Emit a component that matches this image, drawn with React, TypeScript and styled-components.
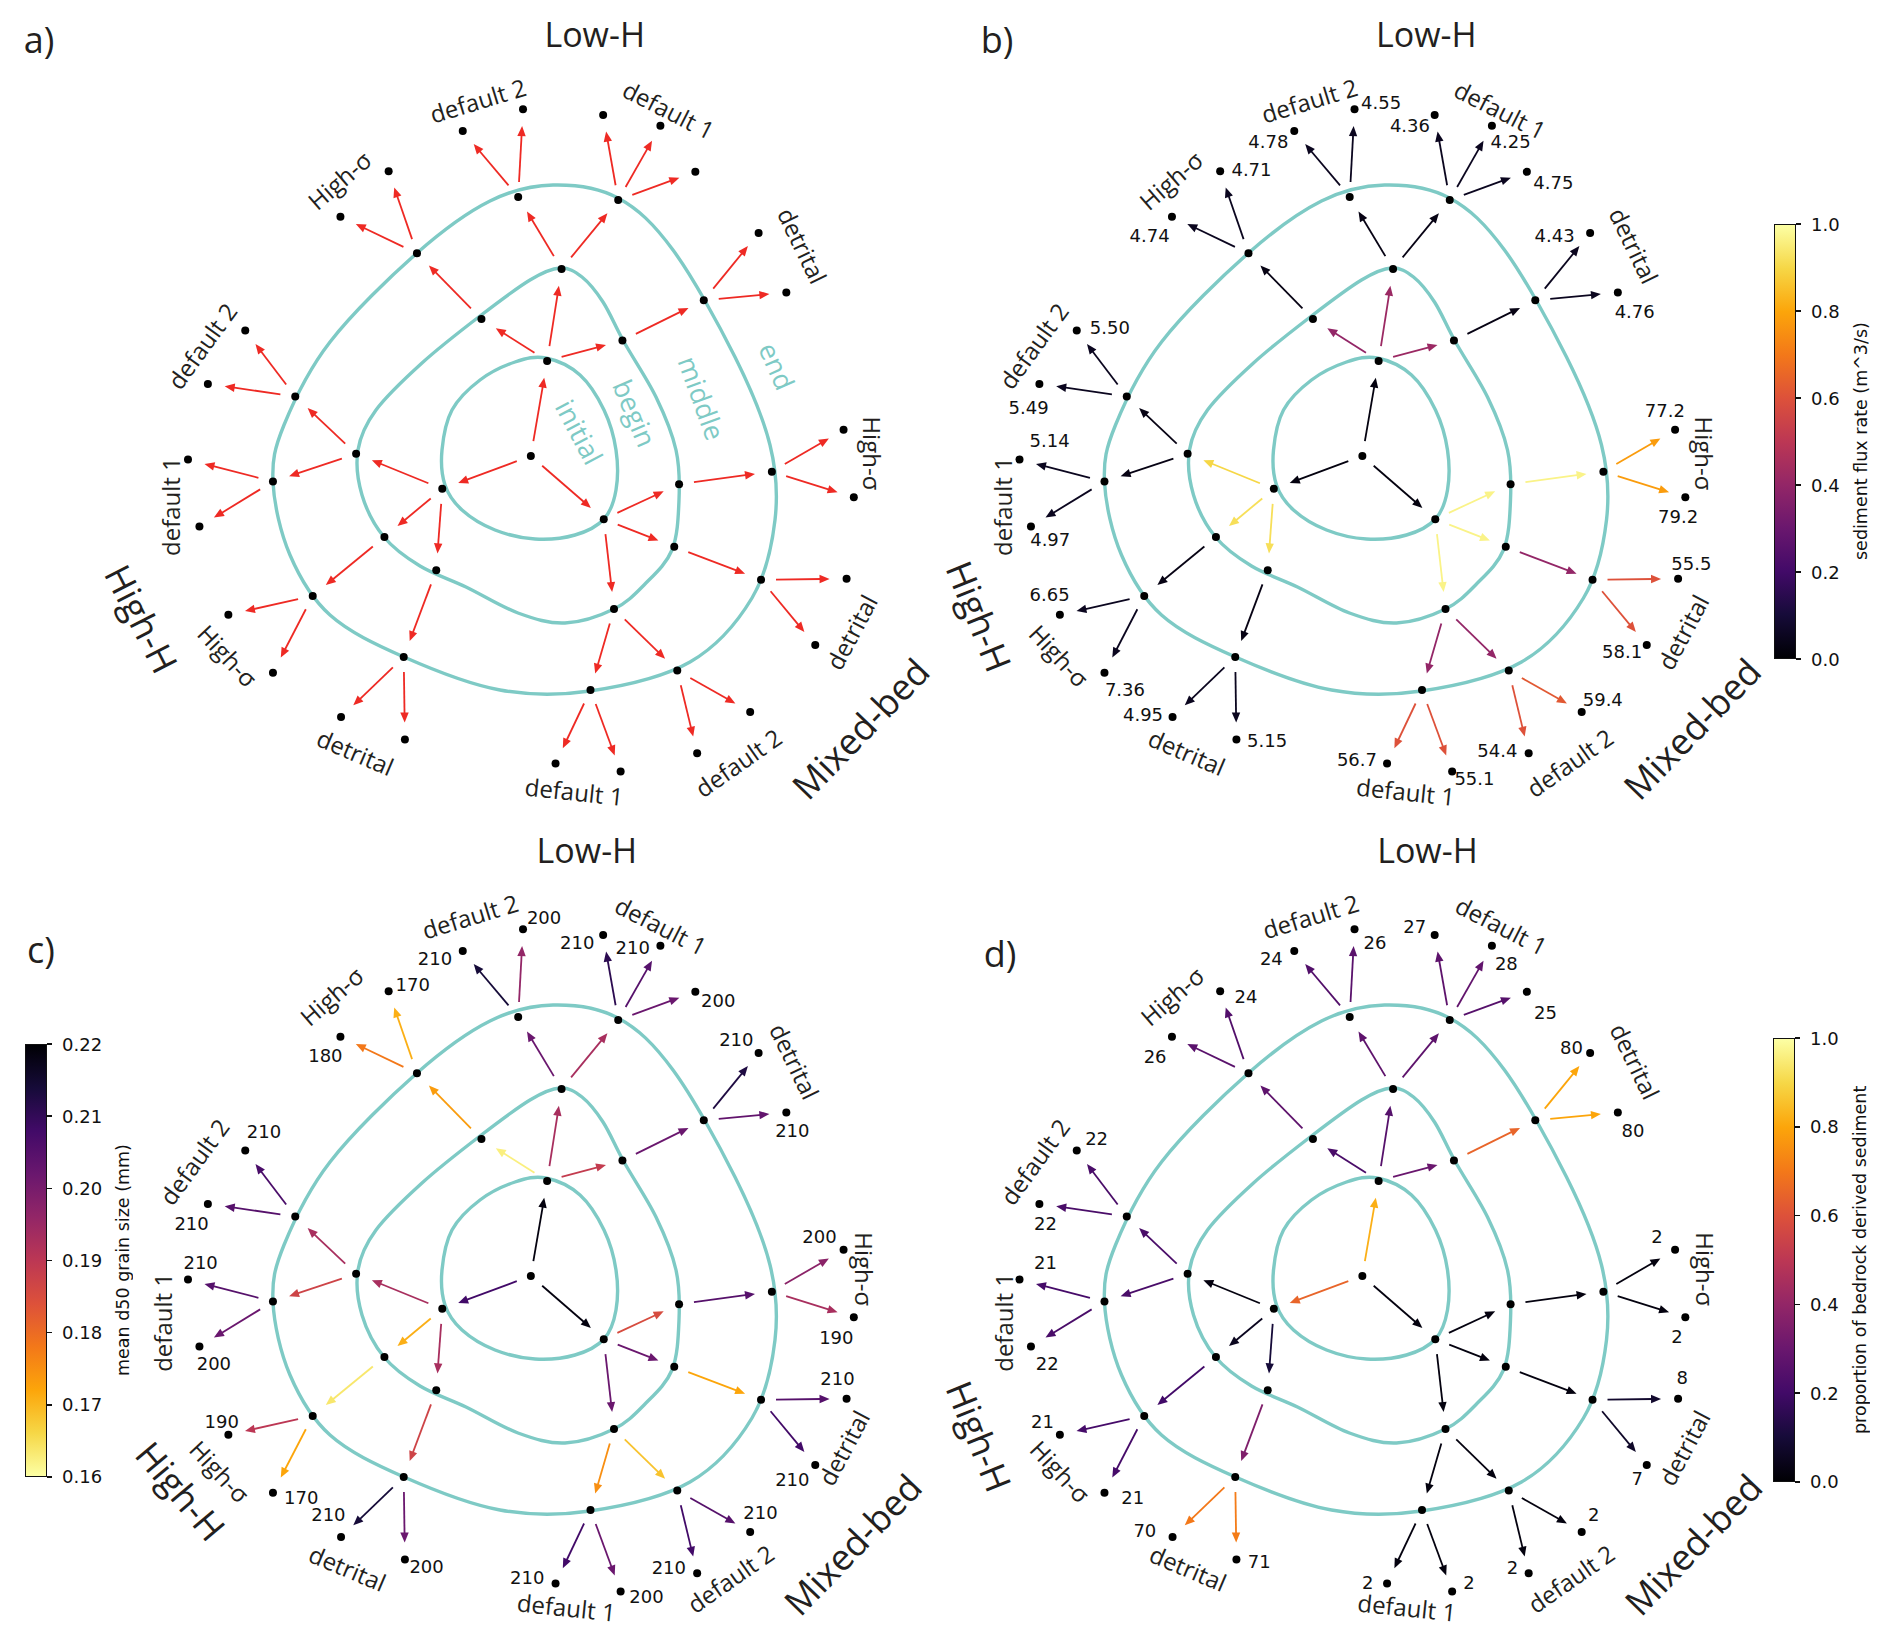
import React from 'react';
import styled, { createGlobalStyle } from 'styled-components';

type Pt = [number, number];

// nodes and labels were traced on a 1570 x 1570 grid laid over each 946 x 820 panel
const KX = 946 / 1570;
const KY = 820 / 1570;

const TEAL = '#7ecac5';
const INK = '#231f20';
const RED = '#ee2a24';

const INFERNO = [
    '#000004', '#160b39', '#420a68', '#6a176e', '#932667', '#bc3754',
    '#dd513a', '#f37819', '#fca50a', '#f6d746', '#fcffa4',
];

const hex = (h: string) => [1, 3, 5].map(i => parseInt(h.slice(i, i + 2), 16));

function inferno(t: number): string {
    const v = Math.min(1, Math.max(0, t)) * 10;
    const i = Math.min(9, Math.floor(v));
    const f = v - i;
    const a = hex(INFERNO[i]);
    const b = hex(INFERNO[i + 1]);
    return `rgb(${a.map((x, k) => Math.round(x + (b[k] - x) * f)).join(',')})`;
}

const INFERNO_CSS = INFERNO.join(', ');

const NODES: Record<string, Pt> = {
    C: [881, 873],
    I1: [908, 691], I2: [734, 936], I3: [1002, 994],
    B1: [932, 515], B2: [799, 611], B3: [1033, 652], B4: [591, 869], B5: [1127, 927],
    B6: [638, 1028], B7: [1119, 1047], B8: [724, 1092], B9: [1019, 1166],
    O1: [860, 377], O2: [1026, 383], O3: [692, 485], O4: [1168, 575], O5: [490, 759], O6: [453, 922],
    O7: [1281, 903], O8: [519, 1141], O9: [1263, 1110], O10: [670, 1258], O11: [1124, 1284], O12: [980, 1321],
};

const LEAVES: Record<string, Pt> = {
    O3a: [565, 415], O3b: [645, 328],
    O1a: [768, 251], O1b: [868, 209],
    O2a: [1001, 220], O2b: [1096, 241], O2c: [1154, 329],
    O4a: [1259, 446], O4b: [1305, 560],
    O5a: [407, 633], O5b: [345, 735],
    O6a: [312, 880], O6b: [331, 1008],
    O7a: [1400, 823], O7b: [1417, 952],
    O8a: [379, 1177], O8b: [453, 1288],
    O9a: [1405, 1108], O9b: [1353, 1235],
    O10a: [566, 1373], O10b: [672, 1416],
    O11a: [1157, 1442], O11b: [1245, 1363],
    O12a: [922, 1462], O12b: [1030, 1477],
};

// [parent, child]
const EDGES: [string, string][] = [
    ['C', 'I1'], ['C', 'I2'], ['C', 'I3'],
    ['I1', 'B1'], ['I1', 'B2'], ['I1', 'B3'],
    ['I2', 'B4'], ['I2', 'B6'], ['I2', 'B8'],
    ['I3', 'B5'], ['I3', 'B7'], ['I3', 'B9'],
    ['B2', 'O3'], ['B1', 'O1'], ['B1', 'O2'], ['B3', 'O4'],
    ['B4', 'O5'], ['B4', 'O6'], ['B6', 'O8'], ['B8', 'O10'],
    ['B5', 'O7'], ['B7', 'O9'], ['B9', 'O12'], ['B9', 'O11'],
    ...Object.keys(LEAVES).map(k => [k.slice(0, -1), k] as [string, string]),
];

// ring outlines in panel pixels, clockwise from the top
const RINGS: Pt[][] = [
    [[546, 358], [580, 375], [604, 410], [616, 450], [616, 490], [604, 519], [575, 535], [535, 539],
        [495, 530], [462, 510], [445, 485], [442, 450], [452, 410], [480, 380], [515, 362]],
    [[560, 268], [582, 277], [603, 302], [624, 342], [656, 397], [676, 450], [679, 500], [672, 550],
        [645, 584], [614, 609], [565, 623], [518, 613], [466, 587], [420, 566], [384, 537], [362, 495],
        [358, 450], [376, 410], [422, 363], [480, 316], [530, 280]],
    [[553, 185], [618, 198], [673, 250], [735, 357], [770, 445], [775, 520], [752, 598], [690, 662],
        [590, 691], [500, 690], [404, 657], [330, 615], [290, 555], [273, 482], [284, 425], [330, 342],
        [417, 253], [490, 201]],
];

const GROUPS: { text: string; at: Pt; r: number }[] = [
    { text: 'default 2', at: [793, 192], r: -17 },
    { text: 'default 1', at: [1110, 210], r: 27 },
    { text: 'High-σ', at: [563, 345], r: -41 },
    { text: 'detrital', at: [1332, 470], r: 64 },
    { text: 'default 2', at: [335, 662], r: -54 },
    { text: 'default 1', at: [283, 970], r: -90 },
    { text: 'High-σ', at: [1448, 868], r: 90 },
    { text: 'High-σ', at: [378, 1255], r: 47 },
    { text: 'detrital', at: [590, 1440], r: 23 },
    { text: 'default 1', at: [953, 1515], r: 6 },
    { text: 'default 2', at: [1225, 1460], r: -35 },
    { text: 'detrital', at: [1413, 1210], r: -62 },
];

const RING_NAMES: { text: string; at: Pt; r: number }[] = [
    { text: 'initial', at: [962, 827], r: 62 },
    { text: 'begin', at: [1054, 791], r: 67 },
    { text: 'middle', at: [1165, 762], r: 70 },
    { text: 'end', at: [1290, 701], r: 66 },
];

type Values = Record<string, [string, number, number]>;

const FLUX_VALUES: Values = {
    O3a: ['4.74', 528, 450], O3b: ['4.71', 697, 325], O1a: ['4.78', 725, 270], O1b: ['4.55', 912, 196],
    O2a: ['4.36', 960, 240], O2b: ['4.25', 1127, 270], O2c: ['4.75', 1198, 350], O4a: ['4.43', 1200, 450],
    O4b: ['4.76', 1333, 597], O5a: ['5.50', 462, 627], O5b: ['5.49', 327, 780], O6a: ['5.14', 362, 843],
    O6b: ['4.97', 363, 1032], O7a: ['77.2', 1383, 785], O7b: ['79.2', 1405, 988], O8a: ['6.65', 362, 1138],
    O8b: ['7.36', 487, 1320], O9a: ['55.5', 1427, 1078], O9b: ['58.1', 1312, 1248], O10a: ['4.95', 517, 1368],
    O10b: ['5.15', 723, 1418], O11a: ['54.4', 1105, 1437], O11b: ['59.4', 1280, 1340], O12a: ['56.7', 872, 1455],
    O12b: ['55.1', 1067, 1490],
};

const GRAIN_VALUES: Values = {
    O3a: ['180', 540, 450], O3b: ['170', 685, 315], O1a: ['210', 722, 265], O1b: ['200', 903, 187],
    O2a: ['210', 958, 235], O2b: ['210', 1050, 245], O2c: ['200', 1192, 345], O4a: ['210', 1222, 420],
    O4b: ['210', 1315, 595], O5a: ['210', 438, 597], O5b: ['210', 318, 773], O6a: ['210', 333, 847],
    O6b: ['200', 355, 1040], O7a: ['200', 1360, 798], O7b: ['190', 1388, 990], O8a: ['190', 368, 1152],
    O8b: ['170', 500, 1297], O9a: ['210', 1390, 1070], O9b: ['210', 1315, 1262], O10a: ['210', 545, 1330],
    O10b: ['200', 708, 1430], O11a: ['210', 1110, 1432], O11b: ['210', 1262, 1325], O12a: ['210', 875, 1450],
    O12b: ['200', 1073, 1486],
};

const BEDROCK_VALUES: Values = {
    O3a: ['26', 537, 452], O3b: ['24', 688, 338], O1a: ['24', 730, 265], O1b: ['26', 902, 235],
    O2a: ['27', 968, 203], O2b: ['28', 1120, 275], O2c: ['25', 1185, 368], O4a: ['80', 1228, 435],
    O4b: ['80', 1330, 595], O5a: ['22', 440, 610], O5b: ['22', 355, 773], O6a: ['21', 355, 848],
    O6b: ['22', 358, 1040], O7a: ['2', 1370, 798], O7b: ['2', 1403, 988], O8a: ['21', 350, 1152],
    O8b: ['21', 500, 1297], O9a: ['8', 1412, 1068], O9b: ['7', 1337, 1260], O10a: ['70', 520, 1360],
    O10b: ['71', 710, 1420], O11a: ['2', 1130, 1432], O11b: ['2', 1265, 1330], O12a: ['2', 890, 1460],
    O12b: ['2', 1058, 1460],
};

const FLUX_TONES: Record<string, number> = {
    I1: .02, I2: .02, I3: .02, B1: .42, B2: .4, B3: .42, B4: .9, B6: .92, B8: .92, B5: .97, B7: .97, B9: .97,
    O1: .03, O2: .03, O3: .03, O4: .03, O5: .03, O6: .03, O8: .03, O10: .03, O7: .97, O9: .4, O11: .4, O12: .4,
    O7a: .78, O7b: .78, O9a: .6, O9b: .6, O11a: .6, O11b: .62, O12a: .6, O12b: .6,
};

const GRAIN_TONES: Record<string, number> = {
    I1: .02, I2: .2, I3: .02, B1: .45, B2: .96, B3: .52, B4: .45, B6: .82, B8: .45, B5: .58, B7: .3, B9: .3,
    O3: .78, O1: .3, O2: .45, O4: .3, O5: .45, O6: .55, O8: .94, O10: .55, O7: .25, O9: .8, O12: .75, O11: .86,
    O3a: .7, O3b: .82, O1a: .1, O1b: .4, O2a: .15, O2b: .25, O2c: .3, O4a: .12, O4b: .28, O5a: .22, O5b: .25,
    O6a: .25, O6b: .3, O7a: .38, O7b: .45, O8a: .5, O8b: .8, O9a: .25, O9b: .2, O10a: .1, O10b: .3,
    O11a: .2, O11b: .25, O12a: .2, O12b: .3,
};

const BEDROCK_TONES: Record<string, number> = {
    I1: .82, I2: .65, I3: .02, B1: .25, B2: .22, B3: .3, B4: .02, B6: .05, B8: .1, B5: .02, B7: .02, B9: .02,
    O3: .27, O1: .27, O2: .27, O4: .65, O5: .22, O6: .22, O8: .2, O10: .35, O7: .02, O9: .02, O12: .02, O11: .02,
    ...Object.fromEntries(Object.entries(BEDROCK_VALUES).map(([k, [v]]) => [k, Math.max(0.02, Number(v) / 100)])),
};

const toneOf = (map: Record<string, number>, fallback: number) => (key: string) => inferno(map[key] ?? fallback);

function smoothClosed(pts: Pt[]): string {
    const n = pts.length;
    const f = (p: number[]) => `${p[0].toFixed(1)},${p[1].toFixed(1)}`;
    let d = `M${f(pts[0])}`;
    for (let i = 0; i < n; i++) {
        const p0 = pts[(i - 1 + n) % n], p1 = pts[i], p2 = pts[(i + 1) % n], p3 = pts[(i + 2) % n];
        const c1 = [p1[0] + (p2[0] - p0[0]) / 6, p1[1] + (p2[1] - p0[1]) / 6];
        const c2 = [p2[0] - (p3[0] - p1[0]) / 6, p2[1] - (p3[1] - p1[1]) / 6];
        d += ` C${f(c1)} ${f(c2)} ${f(p2)}`;
    }
    return d + 'Z';
}

function Arrow({ from, to, color }: { from: Pt; to: Pt; color: string }) {
    const dx = to[0] - from[0];
    const dy = to[1] - from[1];
    const len = Math.hypot(dx, dy);
    const ux = dx / len, uy = dy / len;
    const sx = from[0] + ux * 15, sy = from[1] + uy * 15;
    const tx = to[0] - ux * 17, ty = to[1] - uy * 17;
    const bx = tx - ux * 10, by = ty - uy * 10;
    const head = [
        [tx, ty], [bx - uy * 4.2, by + ux * 4.2], [bx + uy * 4.2, by - ux * 4.2],
    ].map(p => p.map(v => v.toFixed(1)).join(',')).join(' ');
    return (
        <g>
            <line x1={sx} y1={sy} x2={bx + ux * 2} y2={by + uy * 2} stroke={color} strokeWidth={1.8} />
            <polygon points={head} fill={color} />
        </g>
    );
}

type DiagramProps = {
    shift: number;
    x0: number;
    width: number;
    tone: (key: string) => string;
    values?: Values;
    letter?: [string, number, number];
    labelShift?: Pt;
    highH: { at: Pt; r: number };
    ringNames?: boolean;
};

function Diagram({ shift, x0, width, tone, values, letter, labelShift = [0, 0], highH, ringNames }: DiagramProps) {
    const P = (p: Pt): Pt => [(p[0] + shift) * KX, p[1] * KY];
    const L = (p: Pt): Pt => P([p[0] + labelShift[0], p[1] + labelShift[1]]);
    const R = (p: Pt): Pt => [p[0] + shift * KX, p[1]];
    const spot = (k: string) => P(NODES[k] ?? LEAVES[k]);
    const rot = ([x, y]: Pt, r: number) => `rotate(${r} ${x.toFixed(1)} ${y.toFixed(1)})`;
    const title = L([987, 65]);
    const mixed = L([1428, 1395]);
    const high = P(highH.at);

    return (
        <DiagramSvg width={width} height={820} viewBox={`${x0} 0 ${width} 820`}>
            {RINGS.map((ring, i) => <Ring key={i} d={smoothClosed(ring.map(R))} />)}
            {EDGES.map(([a, b]) => <Arrow key={b} from={spot(a)} to={spot(b)} color={tone(b)} />)}
            {[...Object.keys(NODES), ...Object.keys(LEAVES)].map(k => {
                const [x, y] = spot(k);
                return <Dot key={k} cx={x} cy={y} r={4} />;
            })}
            {ringNames && RING_NAMES.map(n => {
                const [x, y] = P(n.at);
                return <RingName key={n.text} x={x} y={y} transform={rot([x, y], n.r)}>{n.text}</RingName>;
            })}
            {GROUPS.map((g, i) => {
                const [x, y] = L(g.at);
                return <GroupLabel key={i} x={x} y={y} transform={rot([x, y], g.r)}>{g.text}</GroupLabel>;
            })}
            {values && Object.entries(values).map(([k, [text, vx, vy]]) => {
                const [x, y] = P([vx, vy]);
                return <Value key={k} x={x} y={y}>{text}</Value>;
            })}
            <Title x={title[0]} y={title[1]}>Low-H</Title>
            <BigLabel x={high[0]} y={high[1]} transform={rot(high, highH.r)}>High-H</BigLabel>
            <BigLabel x={mixed[0]} y={mixed[1]} transform={rot(mixed, -46)}>Mixed-bed</BigLabel>
            {letter && <Letter x={letter[1]} y={letter[2]}>{letter[0]}</Letter>}
        </DiagramSvg>
    );
}

type ColorbarProps = {
    width: number;
    top: number;
    left: number;
    height: number;
    ticks: string[];
    label: string;
    flip?: boolean;
    letter?: string;
};

function Colorbar({ width, top, left, height, ticks, label, flip, letter }: ColorbarProps) {
    return (
        <CbColumn $w={width} $top={top} $left={left}>
            {letter && <PanelLetter>{letter}</PanelLetter>}
            <CbBody>
                <CbBar $h={height} $flip={flip} />
                <CbTicks $h={height}>
                    {ticks.map(t => <CbTick key={t}>{t}</CbTick>)}
                </CbTicks>
                <CbLabel $h={height}>{label}</CbLabel>
            </CbBody>
        </CbColumn>
    );
}

export default function App() {
    return (
        <>
            <GlobalStyle />
            <Figure>
                <Panel>
                    <Diagram
                        shift={0} x0={0} width={946}
                        tone={() => RED}
                        letter={['a)', 39, 39]}
                        highH={{ at: [235, 1185], r: 63 }}
                        ringNames
                    />
                </Panel>
                <Panel>
                    <Diagram
                        shift={-190} x0={0} width={826}
                        tone={toneOf(FLUX_TONES, 0.05)}
                        values={FLUX_VALUES}
                        letter={['b)', 51, 39]}
                        highH={{ at: [245, 1180], r: 68 }}
                    />
                    <Colorbar
                        width={120} top={224} left={2} height={435}
                        ticks={['1.0', '0.8', '0.6', '0.4', '0.2', '0.0']}
                        label="sediment flux rate (m^3/s)"
                    />
                </Panel>
                <Panel>
                    <Colorbar
                        width={140} top={110} left={25} height={433}
                        ticks={['0.22', '0.21', '0.20', '0.19', '0.18', '0.17', '0.16']}
                        label="mean d50 grain size (mm)"
                        letter="c)"
                        flip
                    />
                    <Diagram
                        shift={0} x0={140} width={806}
                        tone={toneOf(GRAIN_TONES, 0.2)}
                        values={GRAIN_VALUES}
                        labelShift={[-13, -8]}
                        highH={{ at: [300, 1285], r: 50 }}
                    />
                </Panel>
                <Panel>
                    <Diagram
                        shift={-190} x0={0} width={826}
                        tone={toneOf(BEDROCK_TONES, 0.02)}
                        values={BEDROCK_VALUES}
                        letter={['d)', 54, 133]}
                        labelShift={[2, -8]}
                        highH={{ at: [245, 1180], r: 68 }}
                    />
                    <Colorbar
                        width={120} top={218} left={1} height={444}
                        ticks={['1.0', '0.8', '0.6', '0.4', '0.2', '0.0']}
                        label="proportion of bedrock derived sediment"
                    />
                </Panel>
            </Figure>
        </>
    );
}

const GlobalStyle = createGlobalStyle`
    html, body {
        margin: 0;
        background: #ffffff;
    }
`

const Figure = styled.div`
    display: grid;
    grid-template-columns: 946px 946px;
    grid-template-rows: 820px 820px;
    width: 1892px;
    height: 1640px;
    background: #ffffff;
`

const Panel = styled.section`
    display: flex;
`

const DiagramSvg = styled.svg`
    display: block;
    flex-shrink: 0;
    overflow: visible;
`

const Ring = styled.path`
    fill: none;
    stroke: ${TEAL};
    stroke-width: 3.4;
`

const Dot = styled.circle`
    fill: #000000;
`

const GroupLabel = styled.text`
    font-family: "Open Sans", "Liberation Sans", sans-serif;
    font-size: 24px;
    fill: ${INK};
    text-anchor: middle;
    dominant-baseline: central;
`

const Title = styled(GroupLabel)`
    font-size: 34px;
`

const BigLabel = styled(GroupLabel)`
    font-size: 36px;
`

const Letter = styled(GroupLabel)`
    font-size: 36px;
`

const RingName = styled(GroupLabel)`
    font-size: 27px;
    fill: ${TEAL};
`

const Value = styled.text`
    font-family: "DejaVu Sans", sans-serif;
    font-size: 18px;
    fill: #111111;
    text-anchor: middle;
    dominant-baseline: central;
`

const CbColumn = styled.div<{ $w: number; $top: number; $left: number }>`
    flex: 0 0 ${p => p.$w}px;
    box-sizing: border-box;
    padding: ${p => p.$top}px 0 0 ${p => p.$left}px;
    display: flex;
    flex-direction: column;
`

const PanelLetter = styled.div`
    font-family: "Open Sans", "Liberation Sans", sans-serif;
    font-size: 36px;
    line-height: 40px;
    color: ${INK};
    margin: 0 0 74px 2px;
`

const CbBody = styled.div`
    display: flex;
    align-items: flex-start;
`

const CbBar = styled.div<{ $h: number; $flip?: boolean }>`
    width: 22px;
    height: ${p => p.$h}px;
    box-sizing: border-box;
    border: 1.5px solid #111111;
    background: linear-gradient(to ${p => (p.$flip ? 'bottom' : 'top')}, ${INFERNO_CSS});
`

const CbTicks = styled.ul<{ $h: number }>`
    list-style: none;
    margin: -11px 0 0 0;
    padding: 0;
    height: ${p => p.$h + 22}px;
    display: flex;
    flex-direction: column;
    justify-content: space-between;
`

const CbTick = styled.li`
    display: flex;
    align-items: center;
    height: 22px;
    font-family: "DejaVu Sans", sans-serif;
    font-size: 18px;
    color: #111111;

    &::before {
        content: '';
        width: 5px;
        height: 1.5px;
        background: #111111;
        margin-right: 10px;
    }
`

const CbLabel = styled.div<{ $h: number }>`
    writing-mode: vertical-rl;
    transform: rotate(180deg);
    height: ${p => p.$h}px;
    margin-left: 11px;
    text-align: center;
    line-height: 20px;
    font-family: "DejaVu Sans", sans-serif;
    font-size: 17.5px;
    color: #111111;
    white-space: nowrap;
`
